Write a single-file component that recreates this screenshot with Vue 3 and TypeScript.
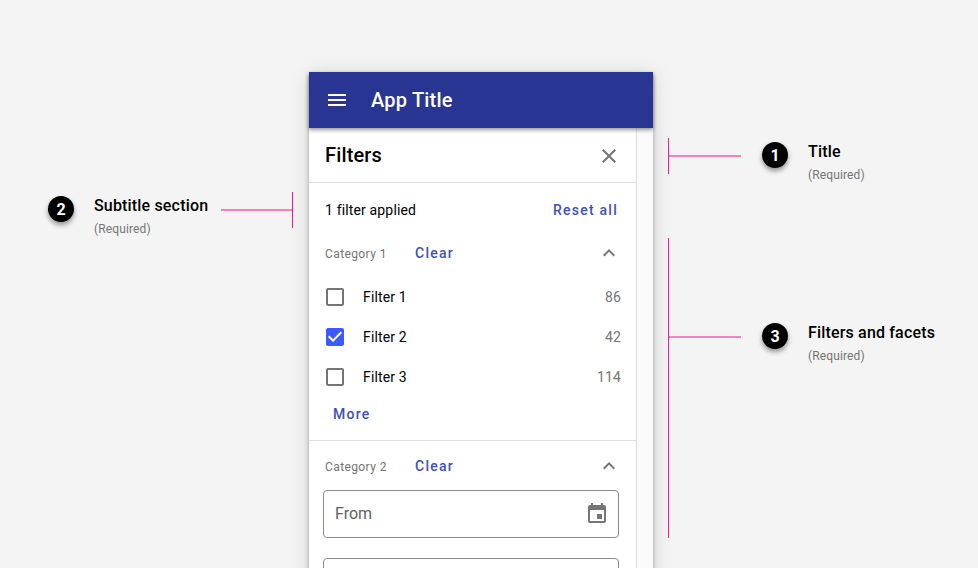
<script setup lang="ts">
import { ref } from 'vue'

interface Facet {
  id: number
  label: string
  count: number
  checked: boolean
}

interface Callout {
  id: number
  label: string
  note: string
  size: 'short' | 'tall'
}

const facets = ref<Facet[]>([
  { id: 1, label: 'Filter 1', count: 86, checked: false },
  { id: 2, label: 'Filter 2', count: 42, checked: true },
  { id: 3, label: 'Filter 3', count: 114, checked: false },
])

const leftCallout: Callout = { id: 2, label: 'Subtitle section', note: '(Required)', size: 'short' }

const rightCallouts: Callout[] = [
  { id: 1, label: 'Title', note: '(Required)', size: 'short' },
  { id: 3, label: 'Filters and facets', note: '(Required)', size: 'tall' },
]
</script>

<template>
  <main class="board">
    <aside class="side side-left">
      <div class="callout short">
        <span class="badge">{{ leftCallout.id }}</span>
        <div class="caption">
          <strong>{{ leftCallout.label }}</strong>
          <small>{{ leftCallout.note }}</small>
        </div>
        <span class="stem"></span>
        <span class="bracket"></span>
      </div>
    </aside>

    <section class="device">
      <header class="app-bar">
        <svg class="icon" viewBox="0 0 24 24"><path d="M3 18h18v-2H3v2zm0-5h18v-2H3v2zm0-7v2h18V6H3z" /></svg>
        <h1>App Title</h1>
      </header>

      <div class="sheet">
        <div class="title-row">
          <h2>Filters</h2>
          <svg class="icon" viewBox="0 0 24 24"><path d="M19 6.41L17.59 5 12 10.59 6.41 5 5 6.41 10.59 12 5 17.59 6.41 19 12 13.41 17.59 19 19 17.59 13.41 12z" /></svg>
        </div>

        <div class="subtitle-row">
          <span class="applied">1 filter applied</span>
          <a class="action">Reset all</a>
        </div>

        <div class="category">
          <span class="category-name">Category 1</span>
          <a class="action">Clear</a>
          <svg class="icon" viewBox="0 0 24 24"><path d="M12 8l-6 6 1.41 1.41L12 10.83l4.59 4.58L18 14z" /></svg>
        </div>

        <ul class="facets">
          <li v-for="facet in facets" :key="facet.id" @click="facet.checked = !facet.checked">
            <svg class="icon" :class="{ checked: facet.checked }" viewBox="0 0 24 24">
              <path v-if="facet.checked" d="M19 3H5c-1.11 0-2 .9-2 2v14c0 1.1.89 2 2 2h14c1.11 0 2-.9 2-2V5c0-1.1-.89-2-2-2zm-9 14l-5-5 1.41-1.41L10 14.17l7.59-7.59L19 8l-9 9z" />
              <path v-else d="M19 5v14H5V5h14m0-2H5c-1.1 0-2 .9-2 2v14c0 1.1.9 2 2 2h14c1.1 0 2-.9 2-2V5c0-1.1-.9-2-2-2z" />
            </svg>
            <span class="facet-name">{{ facet.label }}</span>
            <span class="facet-count">{{ facet.count }}</span>
          </li>
        </ul>
        <div class="more-row"><a class="action">More</a></div>

        <div class="category second">
          <span class="category-name">Category 2</span>
          <a class="action">Clear</a>
          <svg class="icon" viewBox="0 0 24 24"><path d="M12 8l-6 6 1.41 1.41L12 10.83l4.59 4.58L18 14z" /></svg>
        </div>
        <div class="field">
          <span>From</span>
          <svg class="icon" viewBox="0 0 24 24"><path d="M17 12h-5v5h5v-5zM16 1v2H8V1H6v2H5c-1.11 0-1.99.9-1.99 2L3 19c0 1.1.89 2 2 2h14c1.1 0 2-.9 2-2V5c0-1.1-.9-2-2-2h-1V1h-2zm3 18H5V8h14v11z" /></svg>
        </div>
        <div class="field"></div>
      </div>
    </section>

    <aside class="side side-right">
      <div v-for="callout in rightCallouts" :key="callout.id" class="callout" :class="callout.size">
        <span class="bracket"></span>
        <span class="stem"></span>
        <span class="badge">{{ callout.id }}</span>
        <div class="caption">
          <strong>{{ callout.label }}</strong>
          <small>{{ callout.note }}</small>
        </div>
      </div>
    </aside>
  </main>
</template>

<style>
body {
  margin: 0;
  overflow: hidden;
}
</style>

<style scoped>
.board {
  display: grid;
  grid-template-columns: 309px 344px 1fr;
  height: 568px;
  overflow: hidden;
  background: #f4f4f4;
  color: #000;
  font-family: Roboto, "Liberation Sans", sans-serif;
}

.icon {
  display: block;
  flex: none;
  width: 24px;
  height: 24px;
  fill: #757575;
}

.device {
  display: flex;
  flex-direction: column;
  height: 640px;
  margin-top: 72px;
  background: #fafafa;
  box-shadow: 0 3px 4px rgba(0, 0, 0, 0.28), 0 3px 20px rgba(0, 0, 0, 0.14);
}

.app-bar {
  z-index: 1;
  display: flex;
  flex: none;
  align-items: center;
  box-sizing: border-box;
  height: 56px;
  padding-left: 16px;
  background: #283593;
  box-shadow: 0 2px 4px rgba(0, 0, 0, 0.42);
}

.app-bar .icon {
  fill: #fff;
}

h1 {
  margin: 0 0 0 22px;
  color: #fff;
  font-size: 20px;
  font-weight: 500;
  letter-spacing: 0.2px;
  line-height: 24px;
}

.sheet {
  flex: 1;
  box-sizing: border-box;
  width: 328px;
  border-right: 1px solid #ddd;
  background: #fff;
}

.title-row {
  display: flex;
  align-items: center;
  justify-content: space-between;
  box-sizing: border-box;
  height: 55px;
  padding: 1px 15px 0 16px;
  border-bottom: 1px solid #ddd;
}

h2 {
  margin: 0 0 2px;
  font-size: 20px;
  font-weight: 500;
  letter-spacing: 0.15px;
  line-height: 24px;
}

.action {
  color: #3f51b5;
  font-size: 14px;
  font-weight: 500;
  letter-spacing: 1.25px;
  line-height: 20px;
}

.subtitle-row {
  display: flex;
  align-items: center;
  justify-content: space-between;
  height: 54px;
  padding: 0 18px 0 16px;
}

.applied {
  font-size: 14px;
  letter-spacing: 0.15px;
  line-height: 20px;
}

.category {
  display: flex;
  align-items: center;
  height: 32px;
  padding: 0 15px 0 16px;
}

.category-name {
  width: 90px;
  padding-top: 1px;
  color: #757575;
  font-size: 12px;
  letter-spacing: 0.4px;
}

.category .icon {
  margin-left: auto;
}

.facets {
  margin: 0;
  padding: 8px 15px 0 14px;
  list-style: none;
}

.facets li {
  display: flex;
  align-items: center;
  height: 40px;
  font-size: 14px;
  letter-spacing: 0.15px;
}

.facets .checked {
  fill: #3d5afe;
}

.facet-name {
  margin-left: 16px;
}

.facet-count {
  margin-left: auto;
  color: #757575;
}

.more-row {
  display: flex;
  align-items: center;
  box-sizing: border-box;
  height: 44px;
  padding: 0 0 10px 24px;
  border-bottom: 1px solid #ddd;
}

.second {
  height: 49px;
  box-sizing: border-box;
  padding-top: 1px;
}

.field {
  display: flex;
  align-items: center;
  justify-content: space-between;
  box-sizing: border-box;
  height: 48px;
  margin: 0 17px 20px 14px;
  padding: 0 9px 0 11px;
  border: 1px solid #8c8c8c;
  border-radius: 4px;
  color: #616161;
  font-size: 16px;
}

.field span {
  margin-top: -1px;
}

.side-left {
  padding: 192px 0 0 48px;
}

.side-right {
  display: flex;
  flex-direction: column;
  gap: 64px;
  padding: 138px 0 0 15px;
}

.callout {
  display: flex;
  align-items: flex-start;
  height: 36px;
}

.bracket {
  flex: none;
  width: 1px;
  height: 36px;
  background: #e91e8c;
}

.stem {
  flex: none;
  width: 72px;
  height: 2px;
  margin-top: 17px;
  background: #f283bf;
}

.badge {
  flex: none;
  width: 26px;
  height: 26px;
  margin: 4px 20px 0 21px;
  border-radius: 50%;
  background: #000;
  box-shadow: 0 3px 5px rgba(0, 0, 0, 0.4);
  color: #fff;
  font-size: 16px;
  font-weight: 700;
  line-height: 27px;
  text-align: center;
}

.caption {
  display: flex;
  flex-direction: column;
  margin-top: 3px;
  white-space: nowrap;
}

.caption strong {
  font-size: 16px;
  font-weight: 500;
  letter-spacing: 0.17px;
  line-height: 22px;
}

.caption small {
  margin-top: 4px;
  color: #757575;
  font-size: 12px;
  letter-spacing: 0.12px;
  line-height: 16px;
}

.side-left .badge {
  margin-left: 0;
}

.side-left .caption {
  width: 127px;
}

.side-left .stem {
  width: 71px;
}

.tall,
.tall .bracket {
  height: 300px;
}

.tall .stem {
  margin-top: 98px;
}

.tall .badge {
  margin-top: 85px;
}

.tall .caption {
  margin-top: 84px;
}
</style>
